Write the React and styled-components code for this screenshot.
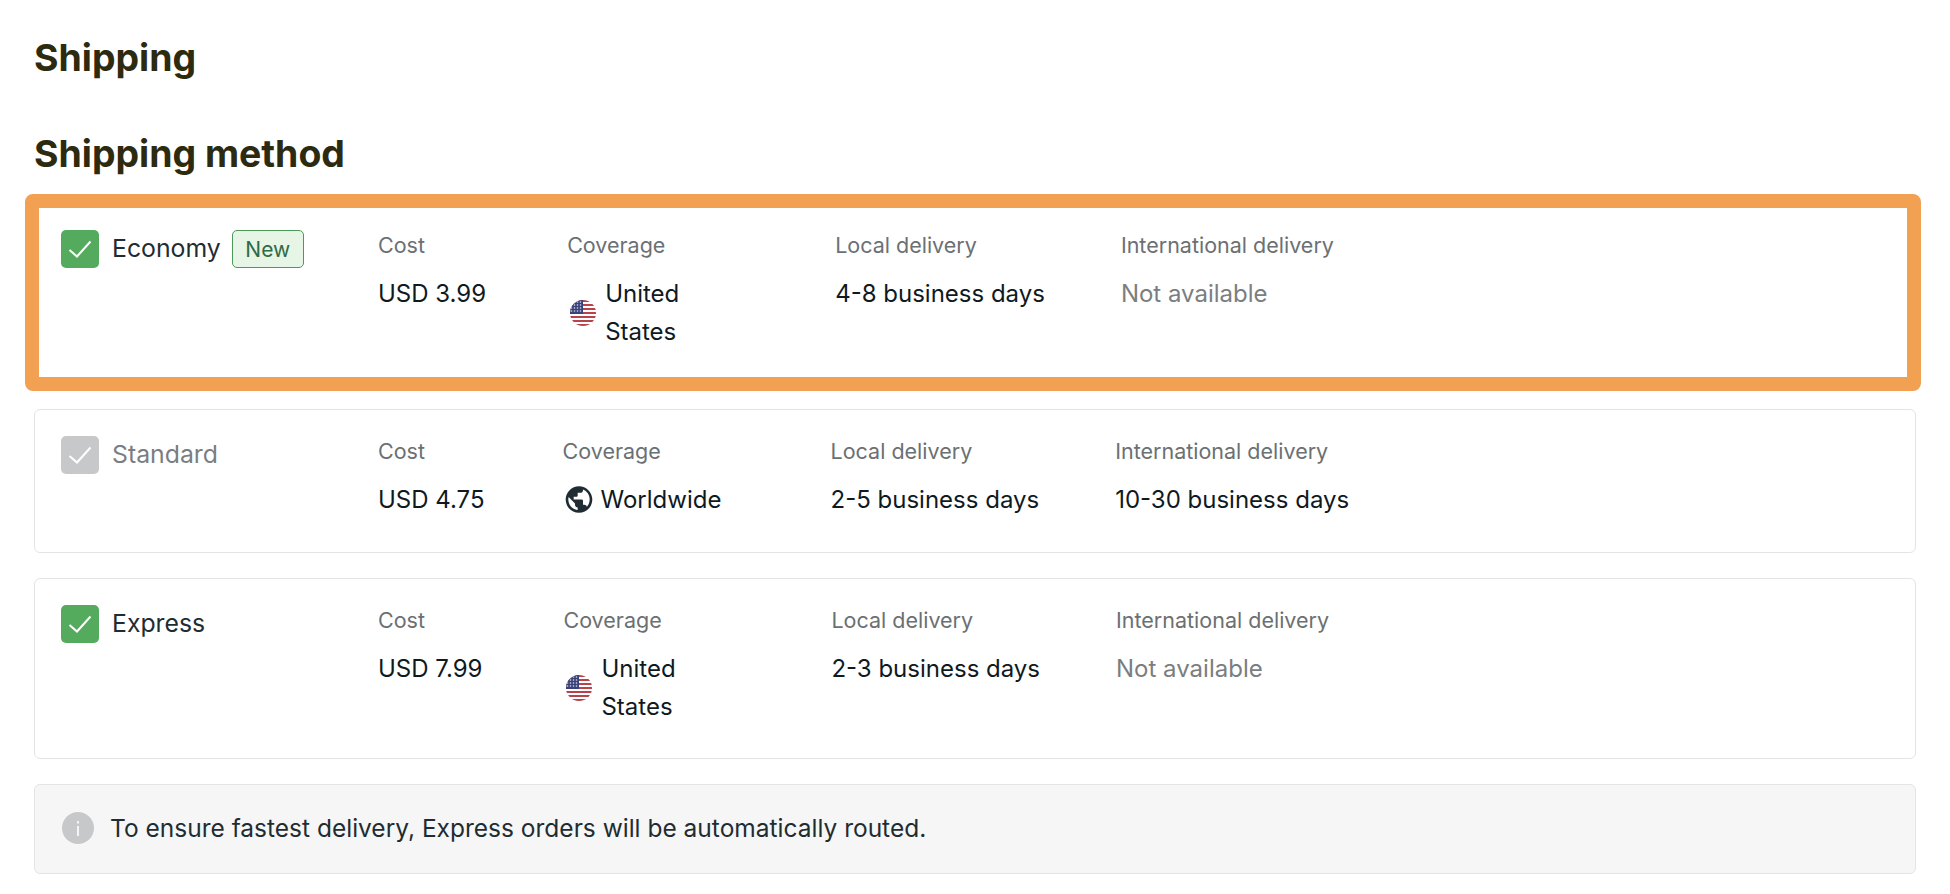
import React from "react";
import styled, { createGlobalStyle } from "styled-components";
import { MdPublic } from "react-icons/md";

const Global = createGlobalStyle`
  html, body { margin: 0; padding: 0; background: #fff; }
  body { font-family: "Inter", "Liberation Sans", sans-serif; }
`;

const Page = styled.main`
  padding: 34px 34px 20px;
`;
const Title = styled.h1`
  margin: 0;
  font-size: 37.4px;
  line-height: 48px;
  font-weight: 700;
  color: #2d2a10;
`;
const Subtitle = styled.h2`
  margin: 48px 0 0;
  font-size: 37.4px;
  line-height: 48px;
  font-weight: 700;
  color: #2d2a10;
`;
const Stack = styled.div`
  display: flex;
  flex-direction: column;
  gap: 25px;
  margin-top: 25px;
`;
const Card = styled.section`
  position: relative;
  display: flex;
  box-sizing: border-box;
  padding: 26px 26px ${(p) => p.$bottom}px;
  background: #fff;
  border: 1px solid #e4e4e4;
  border-radius: 6px;
`;
const Highlight = styled.div`
  position: absolute;
  top: -10px;
  right: -6px;
  bottom: -8px;
  left: -10px;
  border: 14px solid #f2a051;
  border-radius: 8px;
  pointer-events: none;
`;
const NameCol = styled.div`
  display: flex;
  align-items: flex-start;
  width: 317px;
  flex: none;
`;
const CheckBox = styled.span`
  display: flex;
  align-items: center;
  justify-content: center;
  width: 38px;
  height: 38px;
  flex: none;
  border-radius: 5px;
  background: ${(p) => (p.$off ? "#c6c8ca" : "#55ab5d")};
`;
const Name = styled.span`
  margin-left: 13px;
  font-size: 24.8px;
  line-height: 36px;
  color: ${(p) => (p.$off ? "#7b7e80" : "#1f2d33")};
`;
const Badge = styled.span`
  display: flex;
  align-items: center;
  justify-content: center;
  box-sizing: border-box;
  margin-left: 11px;
  width: 72px;
  height: 38px;
  font-size: 21px;
  color: #2f6b45;
  background: #e6f5e6;
  border: 1px solid #4c9a58;
  border-radius: 5px;
`;
const Details = styled.div`
  display: flex;
`;
const Col = styled.div`
  flex: ${(p) => (p.$width ? `0 0 ${p.$width}px` : "none")};
  margin-right: ${(p) => p.$after || 0}px;
`;
const Label = styled.div`
  font-size: 21.5px;
  line-height: 30px;
  color: #6b7073;
  margin-bottom: 14.5px;
`;
const Value = styled.div`
  font-size: 24px;
  line-height: 38px;
  color: ${(p) => (p.$muted ? "#7b7e80" : "#0f1a1f")};
`;
const Coverage = styled(Value)`
  display: flex;
  align-items: center;
  gap: 6px;
`;
const IconBox = styled.span`
  display: flex;
  align-items: center;
  justify-content: center;
  width: 32px;
  flex: none;
  color: #1f2d33;
`;
const Notice = styled.aside`
  display: flex;
  align-items: center;
  gap: 16px;
  height: 90px;
  box-sizing: border-box;
  padding: 0 27px 2px;
  background: #f6f6f6;
  border: 1px solid #e4e4e4;
  border-radius: 6px;
  font-size: 24.5px;
  color: #1f2d33;
`;

const Check = () => (
  <svg width="38" height="38" viewBox="0 0 38 38" fill="none">
    <path d="M8.5 20l7.5 6.5L29.5 11.5" stroke="#fff" strokeWidth="2" />
  </svg>
);

const Flag = ({ id }) => (
  <svg width="26" height="26" viewBox="0 0 26 26">
    <defs>
      <clipPath id={id}>
        <circle cx="13" cy="13" r="13" />
      </clipPath>
    </defs>
    <g clipPath={`url(#${id})`}>
      <rect width="26" height="26" fill="#fff" />
      {[0, 4, 8, 12, 16, 20, 24].map((y) => (
        <rect key={y} y={y} width="26" height="2" fill="#b8434a" />
      ))}
      <rect width="13" height="14" fill="#39437a" />
      {[1.5, 4.5, 7.5, 10.5].map((y) =>
        [1.5, 4.5, 7.5, 10.5].map((x) => (
          <circle key={`${x}-${y}`} cx={x} cy={y + 0.5} r="0.8" fill="#d9dcec" />
        ))
      )}
    </g>
  </svg>
);

const Info = () => (
  <svg width="32" height="32" viewBox="0 0 32 32" style={{ flex: "none" }}>
    <circle cx="16" cy="16" r="16" fill="#c6c8ca" />
    <rect x="15" y="14" width="2" height="10" fill="#f5f5f5" />
    <rect x="15" y="9" width="2" height="2.5" fill="#f5f5f5" />
  </svg>
);

const methods = [
  { name: "Economy", badge: "New", cost: "USD 3.99", costAfter: 81, coverage: "United States", flag: "a", local: "4-8 business days", intl: "Not available", highlighted: true },
  { name: "Standard", off: true, cost: "USD 4.75", costAfter: 78, coverage: "Worldwide", local: "2-5 business days", intl: "10-30 business days" },
  { name: "Express", cost: "USD 7.99", costAfter: 81, coverage: "United States", flag: "b", local: "2-3 business days", intl: "Not available" },
];

export default function App() {
  return (
    <Page>
      <Global />
      <Title>Shipping</Title>
      <Subtitle>Shipping method</Subtitle>
      <Stack>
        {methods.map((m) => (
          <Card key={m.name} $bottom={m.flag ? 32.5 : 33.5}>
            <NameCol>
              <CheckBox $off={m.off}><Check /></CheckBox>
              <Name $off={m.off}>{m.name}</Name>
              {m.badge && <Badge>{m.badge}</Badge>}
            </NameCol>
            <Details>
              <Col $after={m.costAfter}>
                <Label>Cost</Label>
                <Value>{m.cost}</Value>
              </Col>
              <Col $width={188} $after={80}>
                <Label>Coverage</Label>
                <Coverage>
                  <IconBox>{m.flag ? <Flag id={m.flag} /> : <MdPublic size={33} />}</IconBox>
                  <span>{m.coverage}</span>
                </Coverage>
              </Col>
              <Col $after={76}>
                <Label>Local delivery</Label>
                <Value>{m.local}</Value>
              </Col>
              <Col>
                <Label>International delivery</Label>
                <Value $muted={m.intl === "Not available"}>{m.intl}</Value>
              </Col>
            </Details>
            {m.highlighted && <Highlight />}
          </Card>
        ))}
        <Notice>
          <Info />
          <span>To ensure fastest delivery, Express orders will be automatically routed.</span>
        </Notice>
      </Stack>
    </Page>
  );
}
